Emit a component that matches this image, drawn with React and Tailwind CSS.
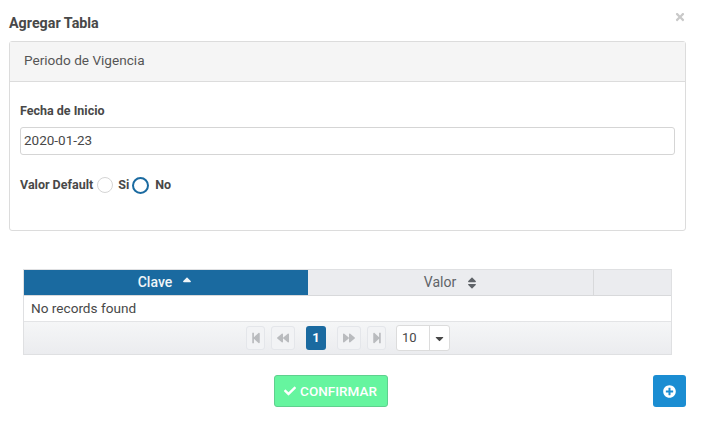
import { FaCheck, FaPlusCircle, FaStepBackward, FaBackward, FaForward, FaStepForward, FaSortUp, FaSort, FaCaretDown, FaTimes } from "react-icons/fa";

const PageButton = ({ icon: Icon, className }) => (
  <span className={`flex h-[24px] items-center justify-center rounded-[3px] border border-[#e4e6ea] bg-[#f2f3f5] text-[#b9bbbe] ${className}`}>
    <Icon className="text-[12px]" />
  </span>
);

const App = () => {
  return (
    <div className="h-[439px] w-[703px] overflow-hidden bg-white font-['Roboto',sans-serif] text-[#333]">
      {/* Title */}
      <div className="flex h-[41px] items-start pl-[9px] pr-[17px] pt-[15px]">
        <h1 className="flex-1 text-[14.3px] leading-[17px] font-bold text-[#484848]">Agregar Tabla</h1>
        <FaTimes className="mt-[-4px] text-[12px] text-[#c9c9c9]" />
      </div>

      {/* Periodo de Vigencia */}
      <div className="ml-[9px] h-[190px] w-[677px] rounded-[3px] border border-[#dcdcdc]">
        <div className="flex h-[40px] items-center border-b border-[#dcdcdc] bg-[#f5f5f5] pb-[2px] pl-[14px] text-[13.6px] text-[#555]">
          Periodo de Vigencia
        </div>
        <div className="px-[10px] pt-[21px]">
          <label className="block text-[12.5px] leading-[16px] font-bold text-[#484848]">Fecha de Inicio</label>
          <div className="mt-[8px] flex h-[28px] w-[655px] items-center rounded-[3px] border border-[#d5d5d5] pb-[2px] pl-[3px] text-[13.5px] text-[#484848]">
            2020-01-23
          </div>
          <div className="mt-[21px] flex h-[18px] items-center text-[12.5px] font-bold text-[#484848]">
            <span>Valor Default</span>
            <span className="ml-[4px] h-[16px] w-[16px] rounded-full border border-[#d5d5d5]"></span>
            <span className="ml-[5px]">Si</span>
            <span className="ml-[3px] h-[17px] w-[17px] rounded-full border-2 border-[#1a6aa0]"></span>
            <span className="ml-[6px]">No</span>
          </div>
        </div>
      </div>

      {/* Table */}
      <div className="mt-[38px] ml-[23px] w-[649px] border border-[#dfe0e2]">
        <div className="flex h-[26px] border-b border-[#d8d9db] text-[14px]">
          <div className="flex w-[284px] items-center justify-center gap-[8px] bg-[#1a6aa0] font-medium text-[#f0f5f8]">
            <span>Clave</span>
            <FaSortUp className="mt-[1px] text-[14px]" />
          </div>
          <div className="flex w-[285px] items-center justify-center gap-[9px] bg-[#ebecef] pl-[2px] text-[#5f6368]">
            <span>Valor</span>
            <FaSort className="text-[14px]" />
          </div>
          <div className="flex-1 border-l border-[#d8d9db] bg-[#ebecef]"></div>
        </div>
        <div className="flex h-[26px] items-center border-b border-[#e3e4e6] pl-[7px] text-[13.6px] text-[#484848]">
          No records found
        </div>
        <div className="flex h-[32px] items-center justify-center bg-gradient-to-b from-[#f5f6f7] to-[#ebecef] pl-[1px]">
          <PageButton icon={FaStepBackward} className="w-[19px]" />
          <PageButton icon={FaBackward} className="ml-[6px] w-[24px]" />
          <span className="ml-[11px] flex h-[24px] w-[20px] items-center justify-center rounded-[3px] bg-[#1a6aa0] text-[13px] font-bold text-white">1</span>
          <PageButton icon={FaForward} className="ml-[11px] w-[24px]" />
          <PageButton icon={FaStepForward} className="ml-[6px] w-[19px]" />
          <div className="ml-[10px] flex h-[26px] w-[54px] rounded-[3px] border border-[#dcdcdc] bg-white text-[13px] text-[#484848]">
            <span className="flex w-[33px] items-center border-r border-[#dcdcdc] pl-[5px]">10</span>
            <span className="flex flex-1 items-center justify-center text-[#484848]">
              <FaCaretDown className="text-[13px]" />
            </span>
          </div>
        </div>
      </div>

      {/* Actions */}
      <div className="mt-[20px] flex w-[686px]">
        <div className="flex flex-1 justify-center pl-[8px]">
          <button className="flex h-[32px] w-[114px] items-center justify-center gap-[4px] rounded-[3px] border border-[#5fd08e] bg-[#66f59f] text-[13.5px] font-medium text-white">
            <FaCheck className="text-[12px]" />
            CONFIRMAR
          </button>
        </div>
        <button className="flex h-[32px] w-[33px] items-center justify-center rounded-[3px] bg-[#1b8dd2] text-white">
          <FaPlusCircle className="text-[13px]" />
        </button>
      </div>
    </div>
  );
};

export default App;
